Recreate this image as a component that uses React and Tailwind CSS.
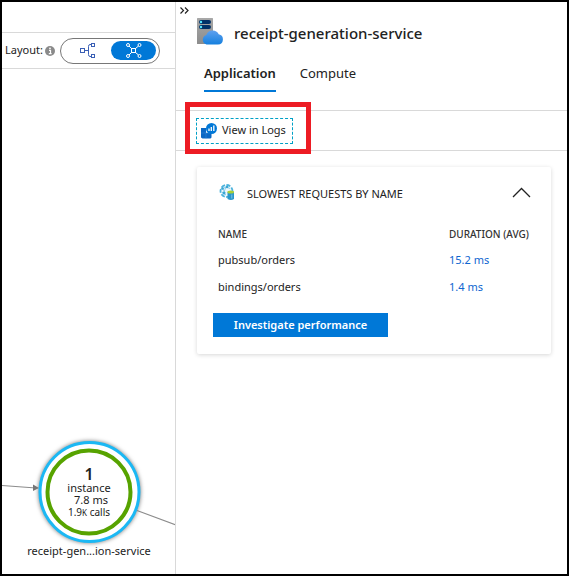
import React from "react";

function TreeIcon() {
  return (
    <svg className="h-4 w-4" viewBox="0 0 16 16" fill="none" stroke="#3a5fb5" aria-hidden="true">
      <rect x="0.5" y="5.5" width="4" height="4" />
      <rect x="11.5" y="0.5" width="3" height="3" />
      <rect x="11.5" y="11.5" width="3" height="3" />
      <path d="M4.5 7.5h4M11.5 1.5h-1.5q-1.5 0-1.5 2v8q0 2 1.5 2h1.5" />
    </svg>
  );
}

function MeshIcon() {
  return (
    <svg className="h-4 w-4" viewBox="0 0 16 16" fill="none" stroke="#ffffff" aria-hidden="true">
      <rect x="5.5" y="5.5" width="4" height="4" />
      <circle cx="2" cy="2" r="1.5" />
      <circle cx="13.5" cy="2" r="1.5" />
      <circle cx="2" cy="13" r="1.5" />
      <circle cx="13.5" cy="13" r="1.5" />
      <path d="M3 3l2.5 2.5M12.5 3L9.5 5.5M3 12l2.5-2.5M12.5 12L9.5 9.5" />
    </svg>
  );
}

function InfoIcon() {
  return (
    <svg className="h-[10px] w-[10px] shrink-0" viewBox="0 0 10 10" aria-hidden="true">
      <circle cx="5" cy="5" r="5" fill="#8a8a8a" />
      <path d="M4 4.3h1.5v3.2M3.8 7.7h2.8" stroke="#ffffff" strokeWidth="1.2" fill="none" />
      <circle cx="5" cy="2.3" r="0.9" fill="#ffffff" />
    </svg>
  );
}

function ServerCloudIcon() {
  return (
    <svg className="h-[27px] w-[27px] shrink-0" viewBox="0 0 27 27" aria-hidden="true">
      <defs>
        <linearGradient id="cloud" x1="0" y1="0" x2="0" y2="1">
          <stop offset="0" stopColor="#5ea0ef" />
          <stop offset="1" stopColor="#1580de" />
        </linearGradient>
        <linearGradient id="tower" x1="0" y1="0" x2="0" y2="1">
          <stop offset="0" stopColor="#a8a8a8" />
          <stop offset="1" stopColor="#8c8c8c" />
        </linearGradient>
      </defs>
      <rect x="0" y="0" width="16" height="26" rx="0.5" fill="url(#tower)" />
      <rect x="2" y="2" width="12" height="4" rx="2" fill="#003067" />
      <rect x="2" y="7" width="12" height="4" rx="2" fill="#003067" />
      <circle cx="4" cy="4" r="1.2" fill="#50e6ff" />
      <circle cx="4" cy="9" r="1.2" fill="#50e6ff" />
      <path
        d="M9.5 26.5a5 5 0 0 1-.2-9.6A6.800 6.800 0 0 1 21.700 16.200a5.200 5.200 0 0 1-.7 10.300z"
        fill="url(#cloud)"
      />
    </svg>
  );
}

function LogsIcon() {
  return (
    <svg className="h-4 w-4 shrink-0" viewBox="0 0 16 16" aria-hidden="true">
      <path d="M0 5h5v5H0zM0 10h5v5.500H1.500L0 14.500zM5 10h5.500v4.500l-1 1H5z" fill="#0b68c4" />
      <path d="M5 9.500v6M0 10h10" stroke="#3a8ad8" strokeWidth="0.500" />
      <circle cx="10.500" cy="5.500" r="5.500" fill="#0078d7" />
      <path d="M8 5.500v2.500M10.300 4v4M12.800 2.500v5.500" stroke="#ffffff" strokeWidth="1.300" />
    </svg>
  );
}

function RequestsIcon() {
  return (
    <svg className="h-4 w-4 shrink-0" viewBox="0 0 16 16" aria-hidden="true">
      <circle cx="7.500" cy="7" r="6" fill="#eef8fc" stroke="#4db3dc" strokeWidth="1.800" strokeDasharray="4 1.500" />
      <path d="M3 5l4-2 4 1.500M4 5l2 4M7 3L5 8M3 8l4 3" stroke="#8dcdea" fill="none" />
      <circle cx="3.500" cy="4.500" r="1.300" fill="#3aa7d5" />
      <circle cx="8" cy="3" r="1.300" fill="#3aa7d5" />
      <circle cx="5" cy="9" r="1.500" fill="#3aa7d5" />
      <path d="M8.500 8h6.500v7q-3 2-6.500 0z" fill="#2997cc" />
      <ellipse cx="11.700" cy="8" rx="3.300" ry="1.500" fill="#a8cf38" />
      <path d="M12.800 10.500v4" stroke="#7dc4e5" />
    </svg>
  );
}

function ServiceNode() {
  return (
    <div className="relative h-36 shrink-0 overflow-hidden">
      <svg className="absolute top-0 left-0 h-36 w-[174px]" viewBox="2 430 174 144" fill="none" aria-hidden="true">
        <path d="M2 485.500L36 488M137 510.500L176 525" stroke="#8c8c8c" strokeWidth="1.200" />
        <path d="M33 484.500l6 3.500-6 3z" fill="#777777" />
        <circle cx="89.500" cy="492" r="49.500" fill="#ffffff" stroke="#1bb8f4" strokeWidth="3" className="drop-shadow-[0_0_2px_#777777]" />
        <circle cx="89" cy="492" r="41.500" stroke="#57a300" strokeWidth="4" />
      </svg>
      <div className="relative flex w-[174px] flex-col items-center pt-9 text-[11px] leading-3 text-[#222222]">
        <strong className="text-base leading-4 font-semibold">1</strong>
        <span>instance</span>
        <span className="pl-1">7.8 ms</span>
        <span className="text-[10px]">1.9<span className="text-[8px]">K</span> calls</span>
        <span className="pt-6 text-[11px] leading-4">receipt-gen...ion-service</span>
      </div>
    </div>
  );
}

function MapPane() {
  return (
    <section className="flex w-[174px] shrink-0 flex-col border-r border-[#d9d9d9]">
      <div className="h-[31px] border-b border-[#d9d9d9]" />
      <div className="flex h-9 items-center border-b border-[#d9d9d9] pl-[3px]">
        <span className="w-10 text-[11px] whitespace-nowrap">Layout:</span>
        <InfoIcon />
        <div className="ml-[5px] flex h-[26px] w-[100px] items-center rounded-full border border-[#777777] p-[3px]">
          <button type="button" aria-label="Tree layout" className="flex h-[19px] flex-1 items-center justify-center">
            <TreeIcon />
          </button>
          <button type="button" aria-label="Mesh layout" className="flex h-[19px] w-[45px] items-center justify-center rounded-full bg-[#0078d7]">
            <MeshIcon />
          </button>
        </div>
      </div>
      <div className="flex flex-1 flex-col justify-end">
        <ServiceNode />
      </div>
    </section>
  );
}

function RequestsCard() {
  return (
    <section className="mx-4 mt-4 ml-[21px] rounded-xs bg-white px-4 pt-[14px] pb-[17px] shadow-[0_1px_4px_rgba(0,0,0,0.16)]">
      <div className="flex h-[22px] items-center pr-1 pl-[6px]">
        <RequestsIcon />
        <h2 className="flex-1 pt-1 pl-3 text-[11px] leading-5">SLOWEST REQUESTS BY NAME</h2>
        <button type="button" aria-label="Collapse">
          <svg className="h-[11px] w-[19px]" viewBox="0 0 19 11" fill="none" stroke="#222222" strokeWidth="1.300" aria-hidden="true">
            <path d="M1 10L9.500 1.500L18 10" />
          </svg>
        </button>
      </div>
      <table className="mt-4 w-full table-fixed text-left text-[11px]">
        <thead>
          <tr className="h-7 text-[10px] text-[#333333]">
            <th className="pt-[2px] pl-[5px] font-medium">NAME</th>
            <th className="w-[86px] pt-[2px] font-medium whitespace-nowrap">DURATION (AVG)</th>
          </tr>
        </thead>
        <tbody>
          <tr className="h-[27px]">
            <td className="pl-[5px]">pubsub/orders</td>
            <td><a href="#pubsub" className="text-[#0f66d0]">15.2 ms</a></td>
          </tr>
          <tr className="h-[27px]">
            <td className="pl-[5px]">bindings/orders</td>
            <td><a href="#bindings" className="text-[#0f66d0]">1.4 ms</a></td>
          </tr>
        </tbody>
      </table>
      <button type="button" className="mt-3 h-6 w-[175px] bg-[#0078d7] text-[11px] font-semibold text-white">
        Investigate performance
      </button>
    </section>
  );
}

function DetailsPane() {
  return (
    <main className="min-w-0 flex-1">
      <button type="button" aria-label="Close panel" className="ml-1 flex h-4 items-center">
        <svg className="h-[7px] w-[9px]" viewBox="0 0 9 7" fill="none" stroke="#222222" strokeWidth="1.200" aria-hidden="true">
          <path d="M0.500 0.500l3 3-3 3M5 0.500l3 3-3 3" />
        </svg>
      </button>
      <header className="flex h-[26px] items-center gap-[10px] pl-[21px]">
        <ServerCloudIcon />
        <h1 className="pt-1 text-[15px] leading-6 font-medium whitespace-nowrap">receipt-generation-service</h1>
      </header>
      <nav className="mt-[17px] flex h-[31px] gap-6 pl-7 text-[13px] leading-6">
        <a href="#application" className="border-b-2 border-[#0078d7] font-semibold">Application</a>
        <a href="#compute">Compute</a>
      </nav>
      <div className="relative mt-[18px] flex h-[41px] items-center border-y border-[#d9d9d9] pl-5">
        <button type="button" className="flex h-[26px] w-[97px] items-center gap-[5px] border border-dashed border-[#00a0c6] pl-1 text-[11px] whitespace-nowrap">
          <LogsIcon />
          View in Logs
        </button>
        <div className="pointer-events-none absolute -top-[9px] left-[9px] h-[52px] w-[126px] border-5 border-[#ed1c24]" />
      </div>
      <RequestsCard />
    </main>
  );
}

export default function App() {
  return (
    <div className="flex min-h-screen border-2 border-black bg-white font-['Noto_Sans','Open_Sans',sans-serif] text-[#222222]">
      <MapPane />
      <DetailsPane />
    </div>
  );
}
